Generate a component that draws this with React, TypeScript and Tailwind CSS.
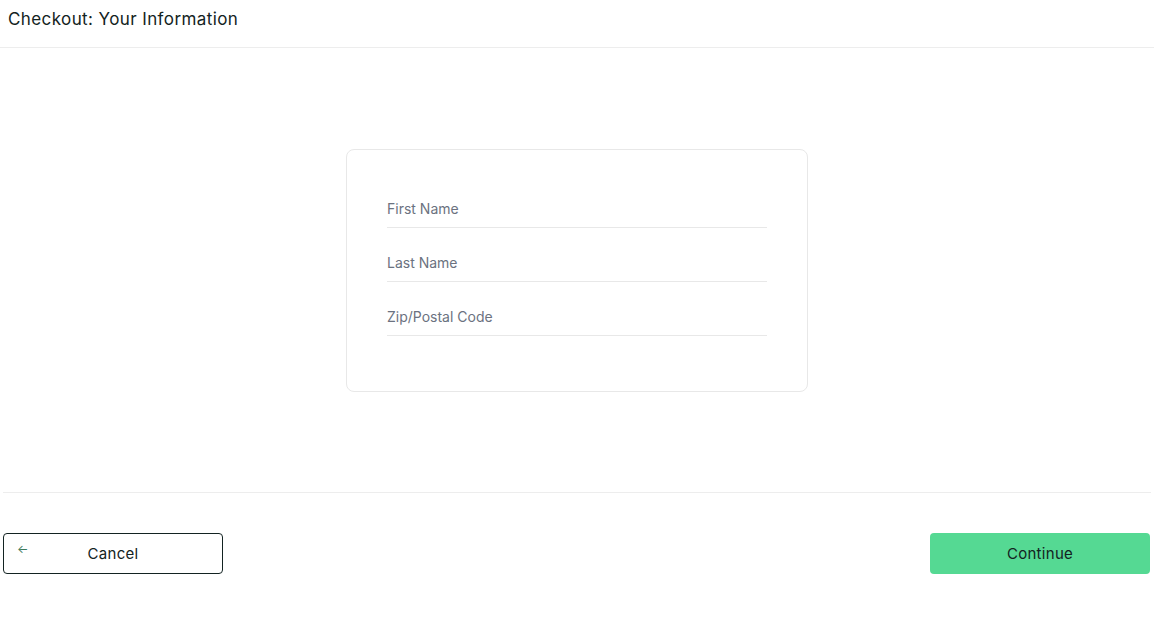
import { useState } from "react";

const fields = [
  { name: "firstName", placeholder: "First Name" },
  { name: "lastName", placeholder: "Last Name" },
  { name: "postalCode", placeholder: "Zip/Postal Code" },
];

const App = () => {
  const [values, setValues] = useState<Record<string, string>>({});

  return (
    <div className="min-h-screen bg-white font-['Inter',sans-serif] text-[#132322]">
      {/* HEADER */}
      <div className="h-12 border-b border-[#ededed] px-2 flex items-center pb-2">
        <h1 className="text-[17px] leading-none tracking-[0.4px]">Checkout: Your Information</h1>
      </div>

      {/* FORM */}
      <div className="h-[444px] flex items-center justify-center">
        <div className="w-[462px] h-[243px] border border-[#e8e8e8] rounded-lg px-10 pt-6">
          {fields.map((f) => (
            <input
              key={f.name}
              name={f.name}
              placeholder={f.placeholder}
              value={values[f.name] ?? ""}
              onChange={(e) => setValues({ ...values, [f.name]: e.target.value })}
              className="block w-full h-[54px] pt-[17px] border-b border-[#e8e8e8] text-sm text-[#132322] placeholder:text-[#6b7280] outline-none bg-transparent"
            />
          ))}
        </div>
      </div>

      {/* FOOTER */}
      <div className="mx-[3px] border-t border-[#ededed] pt-10 flex justify-between">
        <button className="relative w-[220px] h-[41px] border border-[#132322] rounded text-[15px] tracking-[0.3px] pt-px">
          <span className="absolute left-[13px] top-[9px] text-[#3d7a5c] text-[12px] leading-none">←</span>
          Cancel
        </button>
        <button className="w-[220px] h-[41px] bg-[#55d993] rounded text-[15px] tracking-[0.3px] pt-px mr-px">
          Continue
        </button>
      </div>
    </div>
  );
};

export default App;
